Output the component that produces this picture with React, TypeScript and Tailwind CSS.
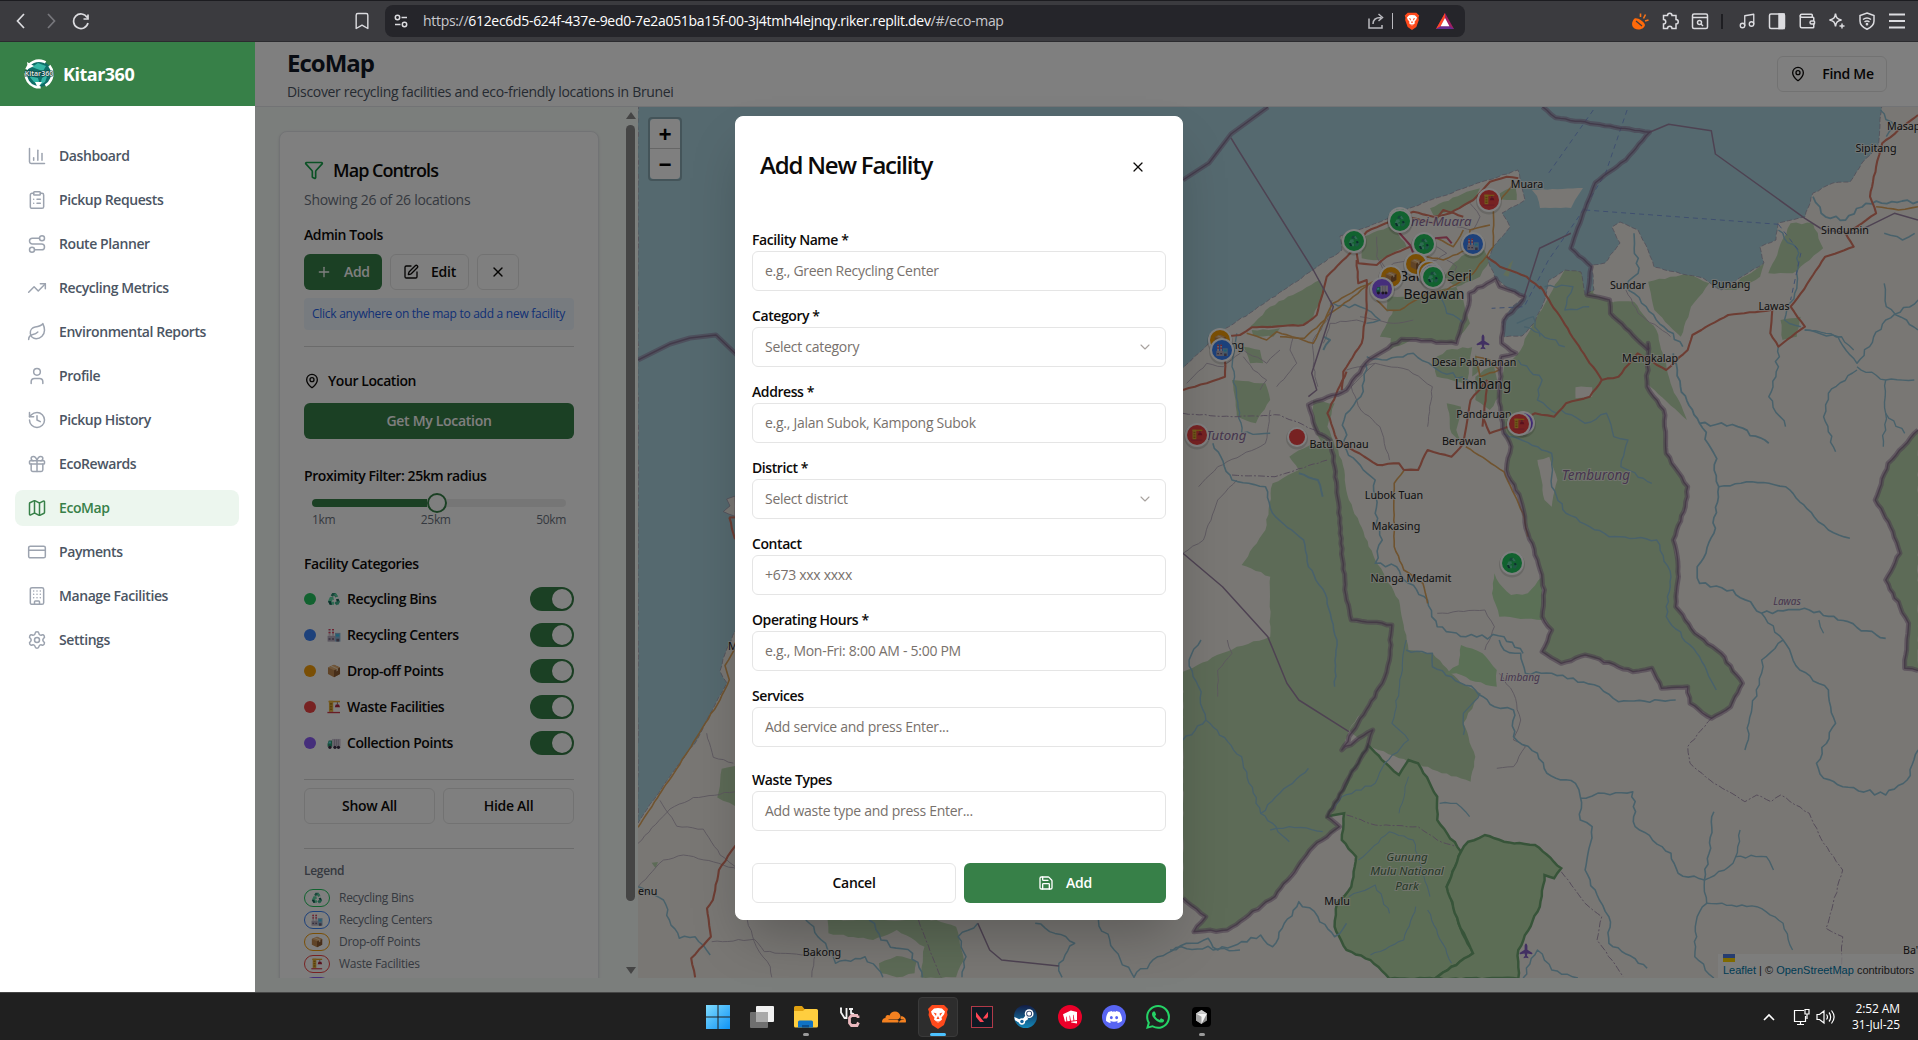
import React from "react";
import {
  ChartColumn, ClipboardList, Route, TrendingUp, Leaf, User, History, Gift, Map as MapIcon, CreditCard, Building,
  Settings, Filter, Plus, SquarePen, X, MapPin, ChevronDown, Save, Bookmark, Music, Wallet, Plane,
} from "lucide-react";
import { SiDiscord, SiWhatsapp, SiCloudflare, SiValorant, SiRiotgames } from "react-icons/si";

/* ---------- map geometry ---------- */

type Pt = [number, number];
const FRAMES: Record<string, [number, number, number, number]> = {
  p: [0, 0, 1, 1],
  n: [1280, 0, 0.40689, 1 / 3],
  e: [1170, 300, 0.4771, 1 / 3],
  s: [1170, 640, 0.4771, 1 / 3],
  b: [1180, 150, 1 / 3, 1 / 3],
  w: [620, 840, 0.3954, 1 / 3],
  l: [630, 80, 1 / 3, 0.574],
};

function pts(src: string): Pt[] {
  let f = FRAMES.p;
  const out: Pt[] = [];
  for (const tok of src.trim().split(/\s+/)) {
    if (FRAMES[tok]) {
      f = FRAMES[tok];
      continue;
    }
    const [x, y] = tok.split(",").map(Number);
    out.push([f[0] + x * f[2], f[1] + y * f[3]]);
  }
  return out;
}

function path(src: string, amp = 0, close = false): string {
  const p = pts(src);
  if (close) p.push(p[0]);
  let seed = Math.round(p[0][0] * 7 + p[0][1] * 13) % 9973;
  const rnd = () => {
    seed = (seed * 9301 + 49297) % 233280;
    return seed / 233280 - 0.5;
  };
  let d = `M${p[0][0].toFixed(1)} ${p[0][1].toFixed(1)}`;
  for (let i = 1; i < p.length; i++) {
    const [ax, ay] = p[i - 1];
    const [bx, by] = p[i];
    const len = Math.hypot(bx - ax, by - ay);
    if (amp > 0) {
      const n = Math.floor(len / 5);
      for (let k = 1; k < n; k++) {
        const t = k / n;
        const o = rnd() * 2 * amp;
        d += `L${(ax + (bx - ax) * t - ((by - ay) / len) * o).toFixed(1)} ${(ay + (by - ay) * t + ((bx - ax) / len) * o).toFixed(1)}`;
      }
    }
    d += `L${bx.toFixed(1)} ${by.toFixed(1)}`;
  }
  return close ? d + "Z" : d;
}

const WATER =
  "p 638,100 1882,100 1880,125 1878,147 1862,163 1850,182 1833,183 1813,193 1805,217 1778,223 1776,240 1760,247 1764,263 1748,273 1721,290 1703,278 1687,275 1654,267 1648,250 1638,230 1620,222 1612,227 1620,243 1605,263 1592,265 1594,290 1585,295 1581,272 1565,270 1549,280 1546,296 1535,322 1522,336 1504,337 1502,322 1513,306 1525,297 1510,290 1495,278 1488,260 1493,247 1510,227 1502,213 1525,200 1518,170 1467,187 1413,207 1380,222 1352,232 1340,236 1342,250 1313,270 1250,313 1220,332 1183,368 735,631 725,654 720,671 727,683 713,709 697,740 663,786 638,823";

const FORESTS = [
  "e 827,-90 883,-100 887,-20 938,10 1002,130 1000,260 1035,330 1040,460 1085,560 1080,620 1055,720 1065,800 1060,920 1100,1000 1155,1060 s 1200,130 1175,200 1135,235 1090,190 1085,140 1030,145 1010,85 970,95 870,45 820,70 780,35 e 800,990 780,950 785,870 770,780 750,700 735,600 705,510 715,440 700,400 690,290 700,200 735,150 760,70 790,0",
  "e 250,470 300,430 330,440 345,500 370,900 380,960 465,975 460,1080 s 445,130 375,270 360,330 425,270 415,315 330,530 355,560 300,620 220,770 120,870 50,875 75,830 27,775 27,95 e 140,1040 210,1010 210,830 150,795 200,690 215,550 270,510",
  "e 300,300 345,310 330,380 360,480 375,600 430,780 480,900 500,1050 s 550,40 610,130 650,160 615,250 640,350 630,425 480,355 415,315 375,270 445,130 460,0 e 460,980 380,960 370,900 345,500 300,380",
  "e 1568,390 1505,490 1478,600 1510,680 1530,760 1500,840 1530,920 1548,970 1540,1080 s 1540,85 1568,92",
  "b 270,470 420,390 435,420 400,500 360,525 210,530",
  "b 550,260 640,225 680,290 600,330 545,325",
  "b 750,175 860,125 900,115 890,145 820,185 760,195",
  "b 960,130 1010,100 1010,150 950,150",
  "b 820,340 900,280 930,330 900,380 830,410 790,380",
  "b 620,440 700,440 680,480 620,485",
  "b 640,520 760,460 850,450 870,520 820,580 700,565 630,600",
  "b 760,630 800,600 880,590 900,660 850,700 770,680",
  "b 215,540 300,535 280,560 220,558",
  "b 190,590 240,600 250,640 210,640",
  "e 130,240 200,250 210,300 180,370 140,350",
  "e 190,50 300,-40 300,60 270,75 170,80",
  "e 480,0 600,-40 620,60 600,125 560,110 500,115 440,110",
  "e 580,310 610,320 600,390 615,440 590,400",
  "e 640,230 680,190 690,290 670,330 640,300",
  "n 905,845 1000,820 1055,850 1010,920 985,1010 920,930",
  "n 820,905 870,905 925,990 960,1150 1000,1260 900,1150",
  "n 1255,670 1310,670 1335,745 1290,790 1260,820 1200,820 1225,750",
  "n 1090,870 1190,790 1180,830 1120,870",
  "n 1230,960 1280,950 1270,1010 1235,1020",
  "w 525,240 800,240 850,260 870,360 850,412 760,412 770,320 700,270 640,300 527,280",
  "w 655,370 700,348 750,365 745,400 700,412 660,400",
  "w 80,68 96,66 90,85",
  "l 275,1200 315,1195 315,1265 262,1250",
];
const LIGHT_FORESTS = [
  "e 680,820 690,850 715,885 750,880 780,830 780,960 690,950 675,880",
  "s 610,15 655,40 685,90 685,140 640,125 600,100 570,105 605,75",
];
const PARKS = [
  "s 415,315 460,380 480,405 500,360 520,370 560,470 560,540 610,635 580,740 605,850 635,940 555,1016 460,1016 420,960 370,930 345,860 350,790 380,740 390,650 360,600 365,520 330,530",
  "s 625,605 660,585 700,605 765,615 820,685 805,715 785,705 775,800 730,930 730,1016 555,1016 635,940 605,850 580,740 610,635",
];
const BORDERS: [string, number][] = [
  ["n 645,320 677,353 908,397 850,480 775,548 745,640 715,745 765,800 755,885 810,900 812,940 905,1050", 0.5],
  ["n 905,1050 e 1002,130 1000,260 1035,330 1040,460 1085,560 1080,620 1055,720 1065,800 1060,920 1100,1000 1155,1060 s 1200,130 1175,200 1135,235 1090,190 1085,140 1030,145 1010,85 970,95 870,45 820,70 780,35 e 800,990 780,950 785,870 770,780 750,700 735,600 705,510 715,440 700,400 690,290 695,170 725,160 695,130 700,60 740,0 n 600,890 540,860 530,835 465,880 e 628,0 600,130 485,118 410,190 370,270 290,315 310,400 335,420 345,500 370,900 380,960 465,975 460,1080 s 445,130 360,330 425,270 415,315 330,530 355,560 300,620 220,770 120,870 50,875 75,830 27,775", 1],
  ["p 1268,107 1231,134 1209,163 1183,180", 0],
  ["e 1568,390 1505,490 1478,600 1510,680 1530,760 1500,840 1530,920 1548,970 1540,1080 s 1540,85 1568,92", 1],
  ["p 638,360 670,344 690,338 716,335 740,358", 0],
];
const THIN_BORDERS = [
  "p 1231,138 b 175,0 400,360 460,470 395,670 410,720 e 290,290",
  "n 908,397 955,373 1060,392 1070,462 1290,655 1335,690 1410,700 1510,640 1568,660",
  "n 715,700 638,745 600,890",
  "e 27,760 110,860 205,1010 s 245,130 270,180 375,275",
  "w 905,250 935,330 965,360 1110,378",
];
const DASHED = [
  "s 1135,235 1085,320 1090,370 1140,430 1205,485 1230,465 1260,485 1280,465 1340,520 1370,610 1410,690 1390,790 1375,865 1410,890 1405,1014",
  "s 820,695 870,790 905,830 895,900 950,1010",
  "s 370,525 430,555 520,560 560,600 600,620",
  "e 130,525 220,530 330,480",
  "e 27,340 130,350 230,345 320,400",
  "w 755,240 790,350 812,412",
];
const FERRIES = [
  "n 770,330 660,520",
  "n 853,330 800,520 740,640 660,780 600,920 520,925",
  "n 750,630 1225,673",
  "n 1225,673 1280,760 1255,900",
];
const TRUNKS = [
  "b 120,560 180,555 215,532 370,525 410,495 440,380 510,310 530,290 560,245 630,215 700,185 760,200 810,190 880,150 930,95 980,80 1015,85",
  "b 680,200 760,220 790,180 850,200",
  "b 530,310 535,340 590,345 620,320 690,290",
  "b 530,330 535,400 560,390 560,480 545,580 490,665 485,720",
  "b 135,600 135,680 80,700 9,720",
  "b 920,320 960,350 1040,380 1080,415 n 640,860 740,1050 e 905,240",
  "e 370,215 330,340 350,420 435,495 480,490 490,510 520,510 540,450 590,470 615,430 630,300 665,240",
  "e 655,380 665,240",
  "e 655,350 670,400 700,385 765,340 805,350 830,310 880,290 905,240 940,230 980,160 1040,210 1085,150 1095,105 1170,45 1260,30",
  "n 1568,345 1480,430 1465,500 1450,590 1465,640 1430,670 1390,700 1410,740 1340,770 1280,880 1255,920 1290,980 1225,1040 1205,1000 1210,930",
  "w 340,-60 290,20 250,90 235,180 220,205 230,290 180,355 190,412",
  "l 298,762 315,762",
  "l 298,762 315,800",
];
const YELLOWS = [
  "b 200,550 260,570 290,545 400,580 440,500 520,440 570,400",
  "b 590,450 620,480 660,480 740,430 800,420 880,370 940,290 940,180 1000,100",
  "b 740,320 790,330 860,300 870,240 930,225",
  "b 770,265 820,290 850,240",
  "e 620,440 700,515 740,640 750,710",
  "e 490,512 470,550 470,740 490,810 530,850 540,910",
  "n 1465,620 1520,630 1568,620",
  "l 24,1302 140,1200 200,1145 270,1080 298,1045 285,1020 315,990",
  "e 640,170 670,180 690,210 650,230 640,180",
  "n 0,1010 60,1015 110,960 130,910 200,860 260,830",
];
const MINORS = [
  "b 290,710 350,640 330,600 340,560",
  "b 430,580 450,520 530,510 560,520",
  "b 540,500 640,520 700,510",
  "e 340,0 330,60 300,120 300,200 310,260",
  "e 370,210 430,190 500,210 550,260 540,380",
  "e 430,190 380,260 400,330 440,380 460,480",
  "e 60,560 100,500 200,430 210,330",
  "e 27,760 70,720 100,600 140,540",
  "e 560,940 660,930 680,980 660,1050",
  "s 690,100 720,160 735,240 720,300 745,320 720,380 685,385",
  "w 46,140 110,60 160,45 250,70 300,90",
  "w 232,305 340,298 365,335 460,345 495,340 485,412",
  "w 322,240 345,320 380,380 384,412",
  "l 24,1330 120,1270 190,1250 315,1240",
  "l 90,1255 140,1300 220,1305 270,1350 315,1370",
  "l 230,1138 250,1180 310,1190",
  "s 100,170 100,90 130,40 120,0",
  "n 850,870 880,940 960,1010",
  "b 600,330 620,360 640,340 700,330",
  "b 800,330 830,350 810,400",
  "b 20,700 80,640 130,650 190,600 260,640 300,600",
  "b 190,620 220,660 260,690 240,720",
  "b 770,290 800,310 770,330 740,340",
  "b 590,260 590,320 610,360",
  "b 870,160 900,200 880,240 830,230",
];
const RIVERS: [string, number, number][] = [
  ["e 410,190 400,290 365,360 370,450 430,540 430,640 445,720 430,790 475,800 500,850 540,900 560,980 620,1010 700,1010 740,1060", 2.4, 1.6],
  ["s 690,0 700,30 735,40 745,100 800,100 900,140 940,185 1060,180", 1.6, 1.6],
  ["s 495,30 550,40 550,80 590,110 640,150 680,200 720,210 720,290 770,340 790,400 850,430 860,470 860,540 885,560 870,690 900,780 920,830 920,910 1000,985", 1.8, 1.6],
  ["s 860,475 910,460 970,455 975,560 1050,640 1065,700 1120,720 1130,640 1140,515", 1.8, 1.6],
  ["s 1120,720 1180,670 1190,620 1195,570", 1.6, 1.4],
  ["s 1185,650 1250,650 1265,690", 1.4, 1.4],
  ["s 1120,720 1125,790 1105,830 1100,950 1140,1014", 1.6, 1.5],
  ["s 1125,790 1230,800 1285,850 1305,930", 1.2, 1.4],
  ["s 615,285 615,220 650,160", 1.2, 1.4],
  ["s 495,0 480,150 465,250 500,300 450,370 430,430 360,470 340,510", 1.2, 1.2],
  ["s 500,410 480,520", 1, 1],
  ["s 565,490 600,490 628,530", 1, 1.3],
  ["s 27,300 75,240 60,140 40,60 65,0", 2, 1.5],
  ["s 75,240 150,350 190,520 250,605", 1.6, 1.4],
  ["s 190,520 230,460 290,385", 1.4, 1.4],
  ["s 210,570 250,560 320,575", 1.4, 1.3],
  ["e 90,430 130,540 200,560 215,640 280,720 290,800 325,880 350,1020 s 345,140", 1.4, 1.6],
  ["e 140,100 130,200 150,400 210,400", 1.4, 1.4],
  ["e 270,520 310,540 320,590", 2.4, 2],
  ["e 700,400 800,460 800,560 830,640 920,710 1020,720 1050,830 1040,950 1110,1070 s 1145,150", 1.4, 1.5],
  ["e 820,330 870,370 915,340 930,410 960,420 945,500 1010,550", 1.4, 1.4],
  ["e 730,180 780,240 770,300 810,340", 2, 1.4],
  ["e 1055,160 1070,260 1110,370 1190,380 1255,430", 2.4, 1.8],
  ["e 1110,370 1140,460 1150,560 1140,700 1105,800 1110,850 1180,870 1240,940 1330,925 1400,960 1500,1015", 2.2, 1.7],
  ["e 1150,560 1220,545 1290,560 1350,650 1380,690 1425,715", 1, 1.6],
  ["e 1275,140 1270,230 1255,290 1290,380", 2, 1.5],
  ["e 1330,90 1400,110 1440,190 1500,60 1568,0", 1.8, 1.5],
  ["e 1440,210 1380,280 1370,350 1395,455", 1.8, 1.5],
  ["e 1440,200 1500,240 1560,240", 1.6, 1.4],
  ["e 1500,240 1500,340 1540,400", 1.6, 1.4],
  ["e 1500,340 1495,440", 1.6, 1.4],
  ["e 1240,940 1285,1020 1240,1080 s 1240,100 1220,200 1205,330", 1.8, 1.5],
  ["e 1285,1020 s 1320,90 1380,150 1395,250 1355,370 1370,415 1410,440 1500,465 1545,420 1568,330", 2, 1.6],
  ["e 1360,960 1370,1000", 1, 1.3],
  ["n 1225,690 1275,760 1265,880 1240,960 1280,980", 1.8, 1.5],
  ["n 1310,590 1330,640 1390,660 1440,610 1568,605", 2.4, 1.8],
  ["n 870,700 880,820 850,860 900,920 990,1040", 2, 1.6],
  ["n 1485,850 1490,920 1540,960 1568,990", 1.8, 1.5],
  ["n 1485,700 1530,720 1560,700", 2, 1.5],
  ["n 1290,990 1380,1010 1410,1050", 1.6, 1.4],
  ["n 1475,330 1510,380 1490,410", 2, 1.5],
  ["b 460,460 540,470 600,510 560,520", 2.4, 1.5],
  ["b 780,440 800,490 850,520", 2, 1.4],
  ["b 560,620 620,630 700,610 760,650 860,690 900,720", 2.4, 1.5],
  ["b 430,600 450,570 430,560", 2, 2],
  ["b 1010,520 1060,500 1080,560", 2, 1.4],
  ["n 650,860 720,860 700,930 760,920", 2.2, 1.4],
  ["n 600,980 640,1000 700,1040", 2.2, 1.4],
  ["s 0,930 80,895 100,930 190,885 215,920 270,785 310,830 345,890 370,850", 2, 1.6],
  ["s 375,770 430,735 460,820", 1.4, 1.2],
  ["s 515,800 490,900 420,945", 1, 1.2],
  ["s 540,810 590,970", 1, 1.2],
  ["s 395,660 460,575 510,600 545,770", 1, 1.1],
  ["s 740,1014 770,930 800,990 855,1014", 1.8, 1.5],
  ["w 46,140 110,180 125,240 150,295 190,290 228,345", 1.6, 1.5],
  ["w 470,240 520,310 545,370 620,350 665,412", 1.8, 1.5],
  ["w 630,240 660,300 740,340 765,412", 3, 1.6],
  ["w 1050,250 1150,310 1110,370 1118,412", 2.4, 1.5],
  ["w 1210,240 1250,330 1300,412 1360,350 1420,320 1568,330", 2.4, 1.5],
  ["w 905,250 855,290 875,350 865,412", 1.8, 1.5],
];

type Label = [string, number, number, number, string?, ("start" | "middle")?];
const LABELS: Label[] = [
  ["Muara", 1527, 187.5, 10.7], ["Masap", 1887, 129.5, 10.7, "", "start"], ["Sipitang", 1876, 151.5, 10.7],
  ["Sindumin", 1845, 233.5, 10.7], ["Sundar", 1628, 288.5, 10.7], ["Punang", 1731, 287.5, 10.7], ["Lawas", 1774, 309.5, 10.7],
  ["Mengkalap", 1650, 361.5, 10.7], ["Desa Pabahanan", 1474, 365.5, 10.7], ["Limbang", 1483, 388.5, 13.7],
  ["Pandaruan", 1484, 418, 10.7], ["Berawan", 1464, 444.5, 10.7], ["Batu Danau", 1339, 448, 10.7],
  ["Lubok Tuan", 1394, 498.5, 10.7], ["Makasing", 1396, 530, 10.7], ["Nanga Medamit", 1411, 582, 10.7],
  ["Mulu", 1337, 904.5, 10.7], ["Ba'", 1903, 953.5, 10.7, "", "start"], ["Bakong", 822, 955.5, 10.7],
  ["enu", 638, 894.5, 10.7, "", "start"], ["M", 728, 650, 10.7, "", "start"], ["ng", 1231, 349, 10.7, "", "start"],
  ["Ban", 1399, 280.5, 14, "", "start"], ["Seri", 1459.5, 280.5, 14], ["Begawan", 1434, 298.5, 14],
  ["nei-Muara", 1411, 226, 13.2, "region", "start"], ["Tutong", 1226, 440, 13.2, "region"],
  ["Temburong", 1596, 479.5, 13.5, "region"], ["Lawas", 1787, 605, 10, "region"], ["Limbang", 1520, 681, 10.2, "region"],
  ["Gunung", 1407, 861, 11.6, "park"], ["Mulu National", 1407, 875, 11.6, "park"], ["Park", 1407, 889.5, 11.6, "park"],
];

/* ---------- category pictograms ---------- */

type Kind = "bin" | "center" | "drop" | "waste" | "truck" | "none";
const KIND_COLOR: Record<Kind, string> = {
  bin: "#22c55e", center: "#3b82f6", drop: "#f59e0b", waste: "#ef4444", truck: "#8b5cf6", none: "#ef4444",
};

function Pictogram({ kind }: { kind: Kind }) {
  switch (kind) {
    case "bin":
      return (
        <g>
          <path d="M5.2 1h3.6l2 3.3-2.3 1.3L7 3.4 6 5 3.6 3.6z" fill="#2f8f74" />
          <path d="M8.8 1l2.6 4H7.6l1-.7L7 2.4z" fill="#5fd6a5" />
          <path d="M2.8 5.2l3.4-.2.8 3.4-1.3-.6-1 2.2H7v3H2.6L.8 9.6z" fill="#5fd6a5" />
          <path d="M.8 9.6L2.6 13H5L3.6 9.2z" fill="#175e56" />
          <path d="M11.4 7l1.8 3-1.7 3H9.8v1L7.4 11.4l2.4-2.4v1h.8L9 7.6z" fill="#3fae8a" />
          <path d="M9 7.6L11.4 7l1 1.8-2 1.2z" fill="#175e56" />
        </g>
      );
    case "center":
      return (
        <g>
          <path d="M1.4 1h2v7h-2zM5 1h2v7H5z" fill="#d9c9d2" />
          <path d="M1.4 1h2v1.4h-2zM5 1h2v1.4H5zM1.4 4h2v1.4h-2zM5 4h2v1.4H5z" fill="#e0405e" />
          <path d="M.4 8H8v6H.4z" fill="#b9aec0" />
          <path d="M8 5h5.6v9H8z" fill="#8fb7d6" />
          <path d="M9 6.4h3.4v2.4H9z" fill="#3fc0ea" />
          <path d="M1.4 10.6h2V12h-2zM5 10.6h2V12H5zM9.4 11h3v3h-3z" fill="#6d6079" />
        </g>
      );
    case "drop":
      return (
        <g>
          <path d="M7 .8l6.2 2.8v6.8L7 13.6.8 10.4V3.6z" fill="#c08850" />
          <path d="M7 6.4l6.2-2.8v6.8L7 13.6z" fill="#8f5c33" />
          <path d="M7 .8l6.2 2.8L7 6.4.8 3.6z" fill="#e0ac72" />
          <path d="M3.4 2.4l6.2 2.8v2.4l1.4-.8V4.6L5 1.7z" fill="#f1d9b5" />
        </g>
      );
    case "waste":
      return (
        <g>
          <path d="M1.4 .8h11.8v1.6H1.4z" fill="#e8a52c" />
          <path d="M1.8 .8h4.4v11.4H1.800z" fill="#e9b53c" />
          <path d="M2.800 3.200h2.400v1.600H2.800zM2.800 6h2.400v1.600H2.800zM2.800 8.800h2.400v1.600H2.800z" fill="#b07d1c" />
          <path d="M10 2.400h.8v2.400h-.8z" fill="#5a4a60" />
          <path d="M8.800 4.600h3.400l1 2.800H7.800z" fill="#b3233c" />
          <path d="M.2 12.200h13v1.400H.2z" fill="#d23b4c" />
        </g>
      );
    case "truck":
      return (
        <g>
          <path d="M5 3h8.8v8H5z" fill="#cfc6d6" />
          <path d="M7 3.6h.7v6.6H7zM9 3.6h.7v6.6H9zM11 3.6h.7v6.6H11z" fill="#9a90a5" />
          <path d="M1.6 4.6H5V11H.4V8z" fill="#2f9a74" />
          <path d="M1.8 5.6h2v2.2H1z" fill="#62e0e8" />
          <circle cx="2.8" cy="11.6" r="1.7" fill="#3a2d45" />
          <circle cx="8" cy="11.6" r="1.7" fill="#3a2d45" />
          <circle cx="11.6" cy="11.6" r="1.7" fill="#3a2d45" />
        </g>
      );
    default:
      return null;
  }
}

const Emoji = ({ kind, size }: { kind: Kind; size: number }) => (
  <svg width={size} height={size} viewBox="0 0 14 14.4" className="shrink-0">
    <Pictogram kind={kind} />
  </svg>
);

const MARKERS: [Kind, number, number][] = [
  ["waste", 1489, 200], ["bin", 1400, 219], ["bin", 1400, 221], ["bin", 1354, 241], ["bin", 1424, 244], ["center", 1473, 244],
  ["drop", 1416, 264], ["drop", 1391, 277], ["drop", 1429, 272], ["center", 1432, 275], ["bin", 1433, 277],
  ["truck", 1382, 289], ["drop", 1220, 340], ["center", 1222, 350], ["waste", 1197, 435], ["none", 1297, 437],
  ["truck", 1523, 423], ["waste", 1519, 424], ["bin", 1512, 563],
];

const BorderLine = ({ d }: { d: string }) => (
  <>
    <path d={d} stroke="#8d6f96" strokeWidth={5} strokeOpacity={0.5} />
    <path d={d} stroke="#7a5c80" strokeWidth={1.4} strokeOpacity={0.65} />
  </>
);

function FacilityMap() {
  return (
    <svg viewBox="638 107 1280 871" width={1280} height={871} className="block font-['Noto_Sans']">
      <rect x="638" y="107" width="1280" height="871" fill="#f2efe9" />
      <g fill="#bbd7ae">
        {FORESTS.map((f) => <path key={f} d={path(f, 0.9, true)} />)}
      </g>
      <g fill="#b7e0ad">
        {LIGHT_FORESTS.map((f) => <path key={f} d={path(f, 0.8, true)} />)}
      </g>
      <path d={path("e 795,470 812,540 800,620 785,600 770,480", 0.8, true)} fill="#f2efe9" />
      <path d={path("e 850,262 885,262 885,290 850,295", 0.8, true)} fill="#f2efe9" />
      <path d={path("s 120,0 27,85 27,0", 0, true)} fill="#f2efe9" />
      {PARKS.map((p) => <path key={p} d={path(p, 0.9, true)} fill="#b9dbaa" stroke="#6fa873" strokeWidth={2.5} />)}
      <path d={path(WATER, 0.6, true)} fill="#aad3df" stroke="#9f93ab" strokeWidth={0.7} strokeDasharray="5 2" />
      <path d={path("p 1532,190 1583,188 1575,200 1571,208 1540,208 1537,196", 0.4, true)} fill="#f2efe9" />
      <path d={path("b 1000,330 985,380 970,375 990,340", 0.5, true)} fill="#c3dcb5" />
      <path d={path("l 315,725 290,730 300,742 280,752 315,760", 0.3, true)} fill="#f2efe9" stroke="#9f93ab" strokeWidth={0.7} />
      <path d={path("b 890,500 925,480 945,500 900,560 880,640 875,720 860,700", 0.8, true)} fill="#f2efe9" />
      <g fill="none" strokeLinejoin="round">
        <g stroke="#b9aebd" strokeWidth={0.9}>
          {MINORS.map((m) => <path key={m} d={path(m, 0.8)} />)}
        </g>
        <g stroke="#92c3d6">
          {RIVERS.map(([r, a, w]) => <path key={r} d={path(r, a)} strokeWidth={w} />)}
        </g>
        <g stroke="#7f9fe0" strokeWidth={1} strokeDasharray="5 4">
          {FERRIES.map((f) => <path key={f} d={path(f)} />)}
        </g>
        <g stroke="#e0a75e" strokeWidth={1.6}>
          {YELLOWS.map((y) => <path key={y} d={path(y, 0.5)} />)}
        </g>
        <g stroke="#db7a66" strokeWidth={2.1}>
          {TRUNKS.map((t) => <path key={t} d={path(t, 0.5)} />)}
        </g>
        <path d={path("b 655,245 690,285 700,310")} stroke="#d45a7c" strokeWidth={2} />
        <path d={path("b 765,265 800,262 815,280")} stroke="#d45a7c" strokeWidth={2} />
        <g stroke="#9c85a4" strokeWidth={1.5}>
          {THIN_BORDERS.map((t) => <path key={t} d={path(t)} />)}
        </g>
        <g stroke="#ab98b3" strokeWidth={1} strokeDasharray="7 2 2 2">
          {DASHED.map((t) => <path key={t} d={path(t, 0.6)} />)}
        </g>
        {BORDERS.map(([b, a]) => <BorderLine key={b} d={path(b, a)} />)}
      </g>
      <Plane x={1475} y={335} width={16} height={16} fill="#8461c4" stroke="none" transform="rotate(-45 1483 343)" />
      <Plane x={1518} y={944} width={16} height={16} fill="#8461c4" stroke="none" transform="rotate(-45 1526 952)" />
      {LABELS.map(([t, x, y, size, tone, anchor]) => (
        <text
          key={t + x}
          x={x}
          y={y}
          fontSize={size}
          textAnchor={anchor ?? "middle"}
          fontStyle={tone ? "italic" : "normal"}
          fill={tone === "region" ? "#8d6c9c" : tone === "park" ? "#4c6f4c" : "#222"}
          stroke="#f6f3ee"
          strokeOpacity={0.7}
          strokeWidth={2}
          paintOrder="stroke"
        >
          {t}
        </text>
      ))}
      {MARKERS.map(([kind, x, y], i) => (
        <g key={i}>
          <circle cx={x} cy={y + 1.5} r={kind === "none" ? 11 : 13} fill="#000" opacity={0.13} />
          <circle cx={x} cy={y} r={kind === "none" ? 10 : 12} fill="#fff" />
          <circle cx={x} cy={y} r={kind === "none" ? 8 : 10} fill={KIND_COLOR[kind]} />
          <g transform={`translate(${x - 6} ${y - 6}) scale(.86)`}>
            <Pictogram kind={kind} />
          </g>
        </g>
      ))}
    </svg>
  );
}

/* ---------- browser chrome ---------- */

const Glyph = ({ children, className }: { children: React.ReactNode; className?: string }) => (
  <svg width="18" height="18" viewBox="0 0 18 18" fill="none" stroke="#dcdce0" strokeWidth="1.5" className={className}>
    {children}
  </svg>
);

function BatTriangle() {
  return (
    <svg width="18" height="16" viewBox="0 0 18 16">
      <path d="M9 0L0 16h18z" fill="#9e1f63" />
      <path d="M9 0L0 16l4.5-2.6L9 5z" fill="#ff4724" />
      <path d="M0 16h18l-4.5-2.8h-9z" fill="#662d91" />
      <path d="M9 5l4.4 8.2H4.6z" fill="#fff" />
    </svg>
  );
}

const BraveLion = ({ width, height, className }: { width: number; height: number; className?: string }) => (
  <svg width={width} height={height} viewBox="0 0 22 25" className={className}>
    <path d="M5 1h12l4 4-1 3 .5 3-3.500 10L11 25l-6-4L1.500 11 2 8 1 5z" fill="#ff4a1c" />
    <path d="M11 4l4 .5 3 3-1 3-2.500 3 .5 2-4 3.500-4-3.500.5-2L5 10.500l-1-3 3-3z" fill="#fff" />
    <path d="M6.500 8.500l3 1-.5 2.500zM15.500 8.500l-3 1 .5 2.500zM11 12l1.500 3h-3zM8.500 16.500l2.500 1.200 2.500-1.200-2.500 2.500z" fill="#ff4a1c" />
  </svg>
);

function BrowserBar() {
  return (
    <div className="flex h-[42px] shrink-0 items-center border-b border-t border-b-[#2b2b2f] border-t-[#1c1c20] bg-[#3b3b3f] pl-3">
      <Glyph><path d="M12 2L5.500 9l6.500 7" strokeWidth="1.7" /></Glyph>
      <Glyph className="ml-3"><path d="M6 2l6.500 7L6 16" stroke="#77777c" strokeWidth="1.700" /></Glyph>
      <Glyph className="ml-3"><path d="M15.200 5.500A7.300 7.300 0 1 0 16 11M16 2.500V7h-4.500" strokeWidth="1.700" /></Glyph>
      <Bookmark className="ml-[262px] size-5 text-[#dcdce0]" strokeWidth={1.7} />
      <div className="ml-[13px] flex h-8 w-[1080px] items-center rounded-lg bg-[#25252a] pl-[7px]">
        <Glyph>
          <circle cx="5.500" cy="5.500" r="2.200" /><path d="M9.500 5.500H15M3 12.500h5.500" /><circle cx="12.500" cy="12.500" r="2.200" />
        </Glyph>
        <span className="ml-[13px] w-[760px] whitespace-nowrap pb-px text-[14px] tracking-[-0.31px] text-[#c9c9ce]">
          https://<span className="text-white">612ec6d5-624f-437e-9ed0-7e2a051ba15f-00-3j4tmh4lejnqy.riker.replit.dev</span>/#/eco-map
        </span>
        <div className="ml-auto flex items-center pr-[11px]">
          <Glyph><path d="M2 6.500V16h13v-3M6 12c0-4 2.500-6.500 8-6.500M11.500 2l4 3.500-4 3.500" stroke="#b9b9be" /></Glyph>
          <span className="ml-[7px] h-4 w-px bg-[#b9b9be]" />
          <BraveLion width={16} height={18} className="ml-[11px]" />
          <span className="ml-4"><BatTriangle /></span>
        </div>
      </div>
      <div className="ml-auto flex items-center gap-3 pr-[12px]">
        <svg width="18" height="18" viewBox="0 0 18 18" fill="none" stroke="#f97316" strokeWidth="1.600">
          <path d="M3.500 6.500C6 5 13 9 14 13c-1 4.500-7 5.500-10.500 3.500S.5 9.500 3.500 6.500z" fill="#ff6a0a" stroke="none" />
          <path d="M5 9l6 5" stroke="#3b3b3f" strokeWidth="1.200" />
          <path d="M9.500 5V1.500M12.500 6.500l2-4M14 9l3.500-1" />
        </svg>
        <Glyph><path d="M5 3.500h1.500a2 2 0 1 1 4.500 0H15v4a2.200 2.200 0 1 1 0 4.500v4.500h-4a2.200 2.200 0 0 0-4.500 0H2.500V12a2.200 2.200 0 0 0 0-4.500v-4z" /></Glyph>
        <Glyph><rect x="1.500" y="2" width="15" height="14.500" rx="1.500" /><path d="M1.500 5.500h15" /><circle cx="8.500" cy="10.500" r="2" /><path d="M10 12l2 2" /></Glyph>
        <span className="mr-[3px] h-[15px] w-0.5 bg-[#1e1e22]" />
        <Music className="size-[18px] text-[#dcdce0]" strokeWidth={1.8} />
        <Glyph><rect x="1.500" y="2" width="15" height="14.500" rx="1.500" /><path d="M11 2h5v14.500h-5z" fill="#dcdce0" /></Glyph>
        <Wallet className="size-[18px] text-[#dcdce0]" strokeWidth={2} />
        <Glyph><path d="M7.500 1.500c.7 4.500 1.500 5.500 6 6.500-4.500 1-5.300 2-6 6.500-.7-4.500-1.500-5.500-6-6.500 4.500-1 5.300-2 6-6.500zM14 11.500v5M11.500 14h5" /></Glyph>
        <Glyph><path d="M9 1l7 2.500V9c0 4-3 6.500-7 8.300C5 15.500 2 13 2 9V3.500z" /><path d="M5 7.500c2.500-2 5.500-2 8 0M6.500 10c1.500-1.200 3.500-1.200 5 0" /><circle cx="9" cy="12.200" r=".6" /></Glyph>
        <Glyph><path d="M1 2.500h16M1 9h16M1 15.500h16" strokeWidth="1.800" /></Glyph>
      </div>
    </div>
  );
}

/* ---------- sidebar ---------- */

const NAV = [
  { label: "Dashboard", icon: ChartColumn }, { label: "Pickup Requests", icon: ClipboardList },
  { label: "Route Planner", icon: Route }, { label: "Recycling Metrics", icon: TrendingUp },
  { label: "Environmental Reports", icon: Leaf }, { label: "Profile", icon: User },
  { label: "Pickup History", icon: History }, { label: "EcoRewards", icon: Gift },
  { label: "EcoMap", icon: MapIcon }, { label: "Payments", icon: CreditCard },
  { label: "Manage Facilities", icon: Building }, { label: "Settings", icon: Settings },
];

function BrandMark() {
  return (
    <svg width="30" height="30" viewBox="0 0 30 30">
      <circle cx="15" cy="15" r="13" fill="#0f6e68" />
      <path d="M8 8l6-4 8 3-3 5-6-2zM5 17l5 6 6 3-2-7zM24 15l-3 8-5 3 2-7z" fill="#35b6a6" />
      <circle cx="15" cy="15" r="13.300" fill="none" stroke="#fff" strokeWidth="2.600" strokeDasharray="23 5" transform="rotate(200 15 15)" />
      <path d="M3 3l1 7 6-3zM14 29l-3-6h7z" fill="#fff" />
      <text x="15" y="17" textAnchor="middle" fontSize="7" fontWeight="600" fill="#e6efee" stroke="#123f3c" strokeWidth="1.200" paintOrder="stroke">Kitar360</text>
    </svg>
  );
}

function Sidebar() {
  return (
    <aside className="flex w-[255px] shrink-0 flex-col bg-white">
      <div className="flex h-16 items-center gap-[9px] bg-[#378048] pl-6">
        <BrandMark />
        <span className="text-[18px] font-bold tracking-[-0.5px] text-white">Kitar360</span>
      </div>
      <nav className="flex flex-col gap-2 pl-[15px] pr-4 pt-8">
        {NAV.map(({ label, icon: Icon }) => {
          const active = label === "EcoMap";
          return (
            <a
              key={label}
              className={
                "flex h-9 items-center gap-3 rounded-lg px-3 text-[14px] font-semibold tracking-[-0.42px] " +
                (active ? "bg-[#ecf6ee] text-[#378048]" : "text-[#4b5563]")
              }
            >
              <Icon className={"size-5 " + (active ? "text-[#378048]" : "text-[#9ca3af]")} strokeWidth={1.8} />
              <span className="pb-0.5">{label}</span>
            </a>
          );
        })}
      </nav>
    </aside>
  );
}

/* ---------- map controls ---------- */

const CATEGORIES: { kind: Kind; label: string }[] = [
  { kind: "bin", label: "Recycling Bins" }, { kind: "center", label: "Recycling Centers" },
  { kind: "drop", label: "Drop-off Points" }, { kind: "waste", label: "Waste Facilities" },
  { kind: "truck", label: "Collection Points" },
];

const outlineBtn = "flex h-9 items-center justify-center rounded-md border border-[#e5e5e5] bg-white";
const heading = "text-[14px] font-semibold leading-5 tracking-[-0.42px]";

function MapControls() {
  return (
    <div className="h-[1000px] w-[320px] shrink-0 rounded-lg border border-[#e5e7eb] bg-white px-6 pt-[26px] text-[#0c0a09] shadow-sm">
      <div className="flex h-[24px] items-center gap-[9px]">
        <Filter className="size-5 text-[#16a34a]" strokeWidth={2} />
        <span className="text-[18px] font-semibold tracking-[-0.95px]">Map Controls</span>
      </div>
      <p className="mt-[8px] text-[14px] leading-5 tracking-[-0.28px] text-[#6b7280]">Showing 26 of 26 locations</p>
      <h3 className={"mt-[15px] " + heading}>Admin Tools</h3>
      <div className="mt-[9px] flex gap-2">
        <div className="flex h-9 w-[78px] items-center rounded-md bg-[#378048] pl-3 text-[14px] font-semibold tracking-[-0.3px] text-white">
          <Plus className="size-4" /><span className="ml-3 pb-px">Add</span>
        </div>
        <div className={outlineBtn + " w-[79px] text-[14px] font-semibold tracking-[-0.3px]"}>
          <SquarePen className="size-4" /><span className="ml-3 pb-px">Edit</span>
        </div>
        <div className={outlineBtn + " w-[42px]"}><X className="size-4" /></div>
      </div>
      <div className="mt-2 flex h-8 items-center whitespace-nowrap rounded bg-[#eff6ff] pl-2 text-[12px] tracking-[-0.27px] text-[#2563eb]">
        Click anywhere on the map to add a new facility
      </div>
      <div className="mt-4 h-px bg-[#d6d6d6]" />
      <div className="mt-6 flex items-center gap-2">
        <MapPin className="size-4" /><span className={heading}>Your Location</span>
      </div>
      <div className="mt-3 flex h-9 items-center justify-center rounded-md bg-[#378048] pb-px text-[14px] font-semibold tracking-[-0.3px] text-white">
        Get My Location
      </div>
      <h3 className={"mt-[27px] " + heading}>Proximity Filter: 25km radius</h3>
      <div className="mt-[7px] px-2">
        <div className="flex h-5 items-center">
          <div className="h-2 w-[115px] rounded-l-full bg-[#378048]" />
          <div className="size-5 shrink-0 rounded-full border-2 border-[#378048] bg-white" />
          <div className="h-2 flex-1 rounded-r-full bg-[#ededed]" />
        </div>
        <div className="-mt-px flex justify-between text-[12px] leading-4 tracking-[-0.35px] text-[#6b7280]">
          <span>1km</span><span>25km</span><span>50km</span>
        </div>
      </div>
      <h3 className={"mt-[26px] " + heading}>Facility Categories</h3>
      <div className="mt-[13px] flex flex-col gap-3">
        {CATEGORIES.map(({ kind, label }) => (
          <div key={kind} className="flex h-6 items-center">
            <svg width="12" height="12"><circle cx="6" cy="6" r="6" fill={KIND_COLOR[kind]} /></svg>
            <span className="ml-[11px] mr-[6px]"><Emoji kind={kind} size={14} /></span>
            <span className={heading}>{label}</span>
            <span className="ml-auto flex h-6 w-11 items-center justify-end rounded-full bg-[#378048] pr-0.5">
              <span className="size-5 rounded-full bg-white shadow" />
            </span>
          </div>
        ))}
      </div>
      <div className="mt-6 h-px bg-[#d6d6d6]" />
      <div className="mt-2 grid grid-cols-2 gap-2 text-[14px] font-semibold tracking-[-0.3px]">
        <div className={outlineBtn + " pb-px"}>Show All</div>
        <div className={outlineBtn + " pb-px"}>Hide All</div>
      </div>
      <div className="mt-6 h-px bg-[#d6d6d6]" />
      <h4 className="mt-[14px] text-[12px] font-semibold leading-4 tracking-[-0.3px] text-[#6b7280]">Legend</h4>
      <div className="mt-[10px] flex flex-col gap-1">
        {CATEGORIES.map(({ kind, label }) => (
          <div key={kind} className="flex h-[18px] items-center text-[12px] tracking-[-0.28px] text-[#6b7280]">
            <span className="flex h-[18px] w-[26px] items-center justify-center rounded-full border" style={{ borderColor: KIND_COLOR[kind] }}>
              <Emoji kind={kind} size={12} />
            </span>
            <span className="ml-[9px]">{label}</span>
          </div>
        ))}
      </div>
    </div>
  );
}

function ScrollRail() {
  return (
    <div className="flex h-[871px] w-[15px] flex-col items-center pb-1 pt-[5px]">
      <svg width="10" height="7"><path d="M5 0l5 7H0z" fill="#8a8a8a" /></svg>
      <div className="mt-[6px] h-[776px] w-[9px] rounded-full bg-[#8a8a8a]" />
      <svg width="10" height="7" className="mt-auto"><path d="M5 7l5-7H0z" fill="#8a8a8a" /></svg>
    </div>
  );
}

/* ---------- dialog ---------- */

function Field({ label, hint, select }: { label: string; hint: string; select?: boolean }) {
  return (
    <div>
      <div className="h-5 text-[14px] font-semibold leading-[18px] tracking-[-0.42px]">{label}</div>
      <div className="flex h-10 items-center justify-between rounded-md border border-[#e5e5e5] px-3 text-[14px] tracking-[-0.28px] text-[#78716c]">
        <span className="pb-0.5">{hint}</span>
        {select && <ChevronDown className="size-4 text-[#a8a29e]" strokeWidth={1.6} />}
      </div>
    </div>
  );
}

function FacilityDialog() {
  return (
    <div className="absolute left-[480px] top-[74px] h-[804px] w-[448px] rounded-lg border border-white bg-white text-[#0c0a09] shadow-2xl">
      <div className="flex h-[100px] items-center justify-between pl-6 pr-[36px]">
        <h2 className="pb-1 text-[24px] font-semibold tracking-[-1.2px]">Add New Facility</h2>
        <X className="size-4" strokeWidth={1.8} />
      </div>
      <div className="flex flex-col gap-4 px-4 pt-[14px]">
        <Field label="Facility Name *" hint="e.g., Green Recycling Center" />
        <Field label="Category *" hint="Select category" select />
        <Field label="Address *" hint="e.g., Jalan Subok, Kampong Subok" />
        <Field label="District *" hint="Select district" select />
        <Field label="Contact" hint="+673 xxx xxxx" />
        <Field label="Operating Hours *" hint="e.g., Mon-Fri: 8:00 AM - 5:00 PM" />
        <Field label="Services" hint="Add service and press Enter..." />
        <div className="pt-2"><Field label="Waste Types" hint="Add waste type and press Enter..." /></div>
        <div className="mt-4 flex gap-2 text-[14px] font-semibold tracking-[-0.3px]">
          <div className="flex h-10 w-[204px] items-center justify-center rounded-md border border-[#e5e5e5] pb-0.5">Cancel</div>
          <div className="flex h-10 flex-1 items-center justify-center gap-3 rounded-md bg-[#378048] text-white">
            <Save className="size-4" /><span className="pb-0.5">Add</span>
          </div>
        </div>
      </div>
    </div>
  );
}

/* ---------- main area ---------- */

function MapPane() {
  return (
    <div className="relative h-[871px] w-[1280px]">
      <FacilityMap />
      <div className="absolute left-[10px] top-[10px] w-[34px] rounded border-2 border-black/20 bg-clip-padding text-center font-['Liberation_Mono'] text-[22px] font-bold leading-[36px] text-black">
        <div className="h-[30px] rounded-t-sm border-b border-[#ccc] bg-white">+</div>
        <div className="h-[30px] rounded-b-sm bg-white">−</div>
      </div>
      <div className="absolute bottom-0 right-0 h-6 w-[200px] whitespace-nowrap bg-white/70 pl-[5px] font-['Liberation_Sans'] text-[11px] text-[#333]">
        <svg width="12" height="8" className="block"><path d="M0 0h12v4H0z" fill="#4c7be1" /><path d="M0 4h12v4H0z" fill="#ffd500" /></svg>
        <div className="leading-4"><span className="text-[#0078a8]">Leaflet</span> | © <span className="text-[#0078a8]">OpenStreetMap</span> contributors</div>
      </div>
    </div>
  );
}

function Main() {
  return (
    <main className="relative flex h-[950px] flex-1 flex-col overflow-hidden bg-[#f7fcf9]">
      <header className="flex h-[65px] shrink-0 items-center justify-between border-b border-[#e5e7eb] bg-white pl-8 pr-[31px]">
        <div className="pt-[3px]">
          <h1 className="text-[24px] font-bold leading-8 tracking-[-1px] text-[#111827]">EcoMap</h1>
          <p className="mt-px text-[14px] leading-6 tracking-[-0.32px] text-[#4b5563]">Discover recycling facilities and eco-friendly locations in Brunei</p>
        </div>
        <div className={outlineBtn + " w-[110px] text-[14px] font-semibold tracking-[-0.3px] text-[#0c0a09]"}>
          <MapPin className="mr-4 size-4" /><span className="pb-px">Find Me</span>
        </div>
      </header>
      <div className="flex h-[871px] overflow-hidden">
        <div className="w-[368px] shrink-0 overflow-hidden pl-6 pt-6"><MapControls /></div>
        <ScrollRail />
        <MapPane />
      </div>
      <div className="absolute inset-0 bg-black/50" />
      <FacilityDialog />
    </main>
  );
}

/* ---------- taskbar ---------- */

function Slot({ children, state }: { children: React.ReactNode; state?: "open" | "active" }) {
  return (
    <div
      className={
        "relative flex h-10 w-10 items-center justify-center rounded " +
        (state === "active" ? "border border-[#3a3a3a] bg-[#2d2d2d]" : "")
      }
    >
      {children}
      {state && (
        <span
          className={
            "absolute h-[3px] rounded-full " +
            (state === "active" ? "bottom-0 w-4 bg-[#4cc2ff]" : "bottom-px w-[6px] bg-[#9a9a9a]")
          }
        />
      )}
    </div>
  );
}

function Taskbar() {
  return (
    <div className="relative flex h-12 shrink-0 items-center justify-center border-t border-[#454545] bg-[#202020]">
      <div className="flex gap-1 pl-px">
        <Slot>
          <svg width="24" height="24" viewBox="0 0 24 24">
            <defs><linearGradient id="win" x1="0" y1="0" x2="1" y2="1"><stop offset="0" stopColor="#7fdcff" /><stop offset="1" stopColor="#0f93f5" /></linearGradient></defs>
            <path d="M0 0h11.500v11.500H0zM12.500 0H24v11.500H12.500zM0 12.500h11.500V24H0zM12.500 12.500H24V24H12.500z" fill="url(#win)" />
          </svg>
        </Slot>
        <Slot>
          <svg width="24" height="22"><rect x="6" width="18" height="16" rx="1" fill="#f1f1f1" /><rect y="6" width="18" height="16" rx="1" fill="#6f6f6f" /><path d="M6 6h12v10H6z" fill="#a9a9a9" /></svg>
        </Slot>
        <Slot state="open">
          <svg width="24" height="22" viewBox="0 0 24 22">
            <path d="M0 1.500Q0 0 1.500 0H8l2.500 3H22v6H0z" fill="#e0a010" />
            <path d="M0 5h9l2-2h11.500Q24 3 24 4.500V20q0 1.500-1.500 1.500h-21Q0 21.500 0 20z" fill="#ffce3f" />
            <path d="M4 21.500V16q0-1.500 1.500-1.500h12Q19 14.500 19 16v5.500z" fill="#0f72c4" />
            <path d="M8 21.500V19h7v2.500z" fill="#0a4f90" />
          </svg>
        </Slot>
        <Slot>
          <svg width="22" height="20" viewBox="0 0 22 20" fill="none" strokeLinejoin="miter">
            <path d="M1 1.500h2M2 1.500v4l3.500 5.500h2V1M10 2h4M12 2v4l3 1" stroke="#f3f3f3" strokeWidth="1.800" />
            <path d="M19 8.500V11M19 8.500h-6.500L10.500 11v5l2 2.500H18l1.500-3" stroke="#eab8bd" strokeWidth="2.800" />
          </svg>
        </Slot>
        <Slot><SiCloudflare className="size-6 text-[#f48120]" /></Slot>
        <Slot state="active"><BraveLion width={22} height={25} /></Slot>
        <Slot>
          <span className="flex size-[22px] items-center justify-center border border-[#b03a48] bg-[#0f1923]">
            <SiValorant className="size-3 text-[#ff4655]" />
          </span>
        </Slot>
        <Slot>
          <svg width="23" height="23" viewBox="0 0 24 24">
            <defs><linearGradient id="steam" x1="0" y1="0" x2="0" y2="1"><stop offset="0" stopColor="#131c45" /><stop offset="1" stopColor="#1387b8" /></linearGradient></defs>
            <circle cx="12" cy="12" r="12" fill="url(#steam)" />
            <path d="M.3 12.500L8 15.800l4-4.800 3 3.500-5 3.500-2.500 1.500L1 16z" fill="#fff" />
            <circle cx="8.300" cy="17.200" r="3.300" fill="#fff" /><circle cx="8.300" cy="17.200" r="1.800" fill="#12609a" />
            <circle cx="15.800" cy="9" r="4.600" fill="#fff" /><circle cx="15.800" cy="9" r="3" fill="#17305e" /><circle cx="15.800" cy="9" r="2.200" fill="#fff" />
          </svg>
        </Slot>
        <Slot>
          <span className="flex size-6 items-center justify-center rounded-full bg-[#eb0029]"><SiRiotgames className="size-[14px] text-white" /></span>
        </Slot>
        <Slot>
          <span className="flex size-6 items-center justify-center rounded-full bg-[#5865f2]"><SiDiscord className="size-4 text-white" /></span>
        </Slot>
        <Slot><SiWhatsapp className="size-6 text-[#25d366]" /></Slot>
        <Slot state="open">
          <svg width="19" height="20" viewBox="0 0 19 20">
            <rect width="19" height="20" rx="4" fill="#000" />
            <path d="M9.500 3l5.500 3.500v7L9.500 17 4 13.500v-7z" fill="#8d8d8d" />
            <path d="M4 6.500h11L9.500 17z" fill="#f4f4f4" /><path d="M4 6.500L9.500 3 15 6.500z" fill="#cfcfcf" /><path d="M4 6.500l5.500 3.300V17L4 13.500z" fill="#a5a5a5" />
          </svg>
        </Slot>
      </div>
      <div className="absolute right-[18px] top-0 flex h-12 items-center">
        <svg width="12" height="8" fill="none" stroke="#fff" strokeWidth="1.600"><path d="M1 7l5-5 5 5" /></svg>
        <svg width="18" height="18" viewBox="0 0 18 18" fill="none" stroke="#fff" strokeWidth="1.200" className="ml-[18px]">
          <path d="M11 2.500H1.500v11h11V8M4 16.500h7M7.500 13.500v3M12 1.500h4v4.500h-4zM14 6v5" />
        </svg>
        <svg width="19" height="18" viewBox="0 0 19 18" fill="none" stroke="#fff" strokeWidth="1.200" className="ml-[5px]">
          <path d="M1 6.500h2.500L8 3v12l-4.500-3.500H1zM10.500 6.500c1.200 1.500 1.200 3.500 0 5M13 4.500c2.200 2.500 2.200 6.500 0 9M15.500 2.500c3.200 4 3.200 9 0 13" />
        </svg>
        <div className="ml-[10px] w-[55px] whitespace-nowrap pb-px text-right text-[12px] leading-4 tracking-[-0.1px] text-white">
          <div>2:52 AM</div><div>31-Jul-25</div>
        </div>
      </div>
    </div>
  );
}

export default function App() {
  return (
    <div className="flex h-[1040px] w-[1918px] flex-col overflow-hidden bg-[#202020] font-['Open_Sans',sans-serif]">
      <BrowserBar />
      <div className="flex h-[950px] shrink-0">
        <Sidebar />
        <Main />
      </div>
      <Taskbar />
    </div>
  );
}
